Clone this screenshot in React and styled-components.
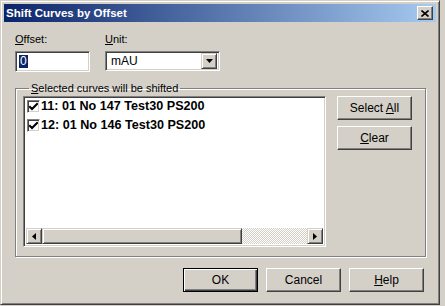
import React from "react";
import styled, { createGlobalStyle } from "styled-components";

const Global = createGlobalStyle`
  html, body { margin: 0; padding: 0; background: #d4d0c8; }
  body { width: 445px; height: 306px; overflow: hidden; font-family: "Liberation Sans", Arial, sans-serif; font-size: 11px; color: #000; }
`;

const Window = styled.div`
  box-sizing: border-box;
  width: 440px;
  height: 305px;
  background: #d4d0c8;
  border-top: 1px solid #d4d0c8;
  border-left: 1px solid #d4d0c8;
  border-right: 1px solid #404040;
  border-bottom: 1px solid #404040;
  box-shadow: inset 1px 1px 0 #fff, inset -1px -1px 0 #808080;
  padding: 3px;
  display: flex;
  flex-direction: column;
`;

const TitleBar = styled.div`
  height: 18px;
  background: linear-gradient(to right, #0a246a, #a6caf0);
  display: flex;
  align-items: center;
  justify-content: space-between;
  padding: 0 3px 0 2px;
`;

const Title = styled.span`
  color: #fff;
  font-weight: bold;
  font-size: 11.5px;
`;

const CloseBtn = styled.div`
  box-sizing: border-box;
  width: 16px;
  height: 14px;
  background: #d4d0c8;
  border-top: 1px solid #fff;
  border-left: 1px solid #fff;
  border-right: 1px solid #404040;
  border-bottom: 1px solid #404040;
  box-shadow: inset -1px -1px 0 #808080;
  display: flex;
  align-items: center;
  justify-content: center;
`;

const Body = styled.div`
  flex: 1;
  display: flex;
  flex-direction: column;
  padding: 11px 8px 0 11px;
`;

const TopRow = styled.div`
  display: flex;
  gap: 15px;
`;

const Field = styled.div`
  display: flex;
  flex-direction: column;
  gap: 5px;
`;

const Label = styled.span`
  line-height: 13px;
  u { text-decoration: underline; }
`;

const Sunken = styled.div`
  box-sizing: border-box;
  height: ${p => p.$h || 21}px;
  width: ${p => p.$w}px;
  background: #fff;
  border-top: 1px solid #808080;
  border-left: 1px solid #808080;
  border-right: 1px solid #fff;
  border-bottom: 1px solid #fff;
  box-shadow: inset 1px 1px 0 #404040, inset -1px -1px 0 #d4d0c8;
  display: flex;
  align-items: center;
`;

const EditText = styled.span`
  margin-left: 3px;
  background: #0a246a;
  color: #fff;
  padding: 0 1px;
  line-height: 13px;
  font-size: 12px;
`;

const ComboText = styled.span`
  flex: 1;
  margin-left: 5px;
  font-size: 12px;
`;

const ArrowBtn = styled.div`
  box-sizing: border-box;
  flex: none;
  width: ${p => p.$w || 16}px;
  height: ${p => p.$h || 17}px;
  background: #d4d0c8;
  border-top: 1px solid #d4d0c8;
  border-left: 1px solid #d4d0c8;
  border-right: 1px solid #404040;
  border-bottom: 1px solid #404040;
  box-shadow: inset 1px 1px 0 #fff, inset -1px -1px 0 #808080;
  display: flex;
  align-items: center;
  justify-content: center;
  margin-right: ${p => p.$mr || 0}px;
`;

const Group = styled.fieldset`
  margin: 10px 0 0 0;
  padding: 1px 8px 9px 7px;
  border: 1px solid #808080;
  box-shadow: 1px 1px 0 #fff, inset 1px 1px 0 #fff;
  width: 411px;
  box-sizing: border-box;
  display: flex;
  gap: 11px;
`;

const Legend = styled.legend`
  padding: 0 2px;
  margin-left: 6px;
  line-height: 13px;
`;

const ListBox = styled.div`
  box-sizing: border-box;
  width: 303px;
  height: 151px;
  background: #fff;
  border-top: 1px solid #808080;
  border-left: 1px solid #808080;
  border-right: 1px solid #fff;
  border-bottom: 1px solid #fff;
  box-shadow: inset 1px 1px 0 #404040, inset -1px -1px 0 #d4d0c8;
  padding: 1px 2px 2px 2px;
  display: flex;
  flex-direction: column;
`;

const Items = styled.div`
  flex: 1;
  padding: 0 0 0 1px;
  display: flex;
  flex-direction: column;
  gap: 3px;
`;

const Item = styled.div`
  display: flex;
  align-items: center;
  gap: 1px;
  font-weight: bold;
  font-size: 12.6px;
  line-height: 16px;
`;

const Check = styled.div`
  box-sizing: border-box;
  width: 13px;
  height: 13px;
  background: #fff;
  border-top: 1px solid #808080;
  border-left: 1px solid #808080;
  border-right: 1px solid #fff;
  border-bottom: 1px solid #fff;
  box-shadow: inset 1px 1px 0 #404040, inset -1px -1px 0 #d4d0c8;
  display: flex;
  align-items: center;
  justify-content: center;
`;

const HScroll = styled.div`
  height: 16px;
  display: flex;
`;

const Thumb = styled.div`
  box-sizing: border-box;
  width: ${p => p.$w}px;
  background: #d4d0c8;
  border-top: 1px solid #d4d0c8;
  border-left: 1px solid #d4d0c8;
  border-right: 1px solid #404040;
  border-bottom: 1px solid #404040;
  box-shadow: inset 1px 1px 0 #fff, inset -1px -1px 0 #808080;
`;

const Track = styled.div`
  flex: 1;
  background-color: #eeece8;
  background-image: repeating-conic-gradient(#d4d0c8 0 25%, #fff 0 50%);
  background-size: 2px 2px;
`;

const SideButtons = styled.div`
  display: flex;
  flex-direction: column;
  gap: 6px;
`;

const Button = styled.div`
  box-sizing: border-box;
  width: 75px;
  height: ${p => p.$h || 24}px;
  background: #d4d0c8;
  border-top: 1px solid ${p => (p.$default ? "#000" : "#fff")};
  border-left: 1px solid ${p => (p.$default ? "#000" : "#fff")};
  border-right: 1px solid ${p => (p.$default ? "#000" : "#404040")};
  border-bottom: 1px solid ${p => (p.$default ? "#000" : "#404040")};
  box-shadow: ${p =>
    p.$default
      ? "inset 1px 1px 0 #fff, inset -1px -1px 0 #404040, inset -2px -2px 0 #808080"
      : "inset -1px -1px 0 #808080"};
  display: flex;
  align-items: center;
  justify-content: center;
  font-size: 12px;
  white-space: pre;
  u { text-decoration: underline; }
`;

const BottomRow = styled.div`
  display: flex;
  justify-content: flex-end;
  gap: 8px;
  margin-top: 11px;
  padding-right: 4px;
`;

const TriDown = () => (
  <svg width="7" height="4" viewBox="0 0 7 4"><path d="M0 0h7L3.5 4z" fill="#000" /></svg>
);
const TriLeft = () => (
  <svg width="4" height="7" viewBox="0 0 4 7"><path d="M4 0v7L0 3.5z" fill="#000" /></svg>
);
const TriRight = () => (
  <svg width="4" height="7" viewBox="0 0 4 7"><path d="M0 0v7l4-3.5z" fill="#000" /></svg>
);
const CheckMark = () => (
  <svg width="9" height="9" viewBox="0 0 9 9">
    <path d="M1 3.5l2 2 5-5" stroke="#000" strokeWidth="2" fill="none" strokeLinecap="square" transform="translate(0,1.5)" />
  </svg>
);
const XIcon = () => (
  <svg width="8" height="7" viewBox="0 0 8 7">
    <path d="M0.5 0.5l7 6M7.5 0.5l-7 6" stroke="#000" strokeWidth="1.6" />
  </svg>
);

const items = ["11: 01 No 147 Test30 PS200", "12: 01 No 146 Test30 PS200"];

export default function App() {
  return (
    <>
      <Global />
      <Window>
        <TitleBar>
          <Title>Shift Curves by Offset</Title>
          <CloseBtn><XIcon /></CloseBtn>
        </TitleBar>
        <Body>
          <TopRow>
            <Field>
              <Label><u>O</u>ffset:</Label>
              <Sunken $w={75} $h={21}><EditText>0</EditText></Sunken>
            </Field>
            <Field>
              <Label><u>U</u>nit:</Label>
              <Sunken $w={115} $h={20}>
                <ComboText>mAU</ComboText>
                <ArrowBtn $w={16} $h={16} $mr={2}><TriDown /></ArrowBtn>
              </Sunken>
            </Field>
          </TopRow>
          <Group>
            <Legend><u>S</u>elected curves will be shifted</Legend>
            <ListBox>
              <Items>
                {items.map(t => (
                  <Item key={t}><Check><CheckMark /></Check>{t}</Item>
                ))}
              </Items>
              <HScroll>
                <ArrowBtn $w={16} $h={16}><TriLeft /></ArrowBtn>
                <Thumb $w={200} />
                <Track />
                <ArrowBtn $w={16} $h={16}><TriRight /></ArrowBtn>
              </HScroll>
            </ListBox>
            <SideButtons>
              <Button $h={24}><span>Select <u>A</u>ll</span></Button>
              <Button $h={24}><span><u>C</u>lear</span></Button>
            </SideButtons>
          </Group>
          <BottomRow>
            <Button $default>OK</Button>
            <Button>Cancel</Button>
            <Button><span><u>H</u>elp</span></Button>
          </BottomRow>
        </Body>
      </Window>
    </>
  );
}
